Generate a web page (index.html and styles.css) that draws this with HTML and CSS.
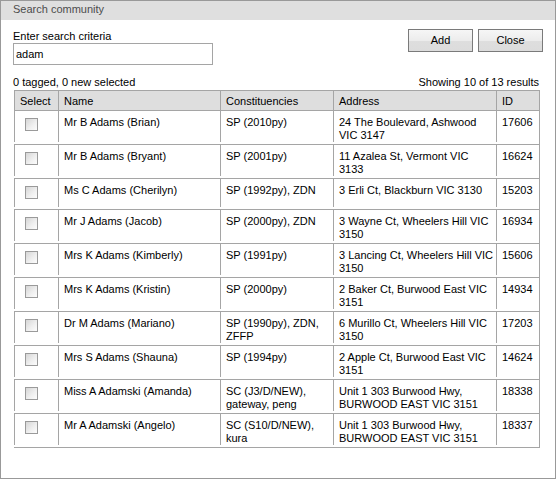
FILE: index.html
```html
<!DOCTYPE html>
<html lang="en">
<head>
    <meta charset="UTF-8">
    <title>Search community</title>
    <link rel="stylesheet" href="styles.css">
</head>
<body>
    <div class="panel">
        <div class="panel-title">Search community</div>

        <div class="search-bar">
            <div class="criteria">
                <label for="criteria">Enter search criteria</label>
                <input id="criteria" type="text" value="adam">
            </div>
            <div class="actions">
                <button class="btn">Add</button>
                <button class="btn">Close</button>
            </div>
        </div>

        <div class="results">
            <div class="summary">
                <span>0 tagged, 0 new selected</span>
                <span>Showing 10 of 13 results</span>
            </div>
            <table class="grid">
                <thead>
                    <tr>
                        <th class="col-select">Select</th>
                        <th class="col-name">Name</th>
                        <th class="col-const">Constituencies</th>
                        <th class="col-addr">Address</th>
                        <th class="col-id">ID</th>
                    </tr>
                </thead>
                <tbody>
                    <tr>
                        <td><input type="checkbox"></td>
                        <td>Mr B Adams (Brian)</td>
                        <td>SP (2010py)</td>
                        <td>24 The Boulevard, Ashwood VIC 3147</td>
                        <td>17606</td>
                    </tr>
                    <tr>
                        <td><input type="checkbox"></td>
                        <td>Mr B Adams (Bryant)</td>
                        <td>SP (2001py)</td>
                        <td>11 Azalea St, Vermont VIC 3133</td>
                        <td>16624</td>
                    </tr>
                    <tr>
                        <td><input type="checkbox"></td>
                        <td>Ms C Adams (Cherilyn)</td>
                        <td>SP (1992py), ZDN</td>
                        <td>3 Erli Ct, Blackburn VIC 3130</td>
                        <td>15203</td>
                    </tr>
                    <tr>
                        <td><input type="checkbox"></td>
                        <td>Mr J Adams (Jacob)</td>
                        <td>SP (2000py), ZDN</td>
                        <td>3 Wayne Ct, Wheelers Hill VIC 3150</td>
                        <td>16934</td>
                    </tr>
                    <tr>
                        <td><input type="checkbox"></td>
                        <td>Mrs K Adams (Kimberly)</td>
                        <td>SP (1991py)</td>
                        <td>3 Lancing Ct, Wheelers Hill VIC 3150</td>
                        <td>15606</td>
                    </tr>
                    <tr>
                        <td><input type="checkbox"></td>
                        <td>Mrs K Adams (Kristin)</td>
                        <td>SP (2000py)</td>
                        <td>2 Baker Ct, Burwood East VIC 3151</td>
                        <td>14934</td>
                    </tr>
                    <tr>
                        <td><input type="checkbox"></td>
                        <td>Dr M Adams (Mariano)</td>
                        <td>SP (1990py), ZDN, ZFFP</td>
                        <td>6 Murillo Ct, Wheelers Hill VIC 3150</td>
                        <td>17203</td>
                    </tr>
                    <tr>
                        <td><input type="checkbox"></td>
                        <td>Mrs S Adams (Shauna)</td>
                        <td>SP (1994py)</td>
                        <td>2 Apple Ct, Burwood East VIC 3151</td>
                        <td>14624</td>
                    </tr>
                    <tr>
                        <td><input type="checkbox"></td>
                        <td>Miss A Adamski (Amanda)</td>
                        <td>SC (J3/D/NEW), gateway, peng</td>
                        <td>Unit 1 303 Burwood Hwy, BURWOOD EAST VIC 3151</td>
                        <td>18338</td>
                    </tr>
                    <tr>
                        <td><input type="checkbox"></td>
                        <td>Mr A Adamski (Angelo)</td>
                        <td>SC (S10/D/NEW), kura</td>
                        <td>Unit 1 303 Burwood Hwy, BURWOOD EAST VIC 3151</td>
                        <td>18337</td>
                    </tr>
                </tbody>
            </table>
        </div>
    </div>
</body>
</html>
```

FILE: styles.css
```css
* {
    margin: 0;
    padding: 0;
    box-sizing: border-box;
}

body {
    font-family: "Liberation Sans", Arial, sans-serif;
    font-size: 11px;
    line-height: 13px;
    color: #000;
    background: #fff;
}

.panel {
    width: 556px;
    height: 479px;
    border: 1px solid #999;
}

.panel-title {
    height: 19px;
    padding: 2px 12px 0;
    background: #dfdfdf;
    color: #4d4d4d;
}

.search-bar {
    display: flex;
    justify-content: space-between;
    padding: 9px 12px 0;
}

.criteria {
    padding-top: 1px;
}

.criteria label {
    display: block;
}

.criteria input {
    display: block;
    width: 200px;
    height: 22px;
    border: 1px solid #a5a5a5;
    padding: 0 2px;
    font: inherit;
    color: #000;
    outline: none;
}

.actions {
    display: flex;
    gap: 5px;
}

.btn {
    width: 65px;
    height: 23px;
    border: 1px solid #7a7a7a;
    background: linear-gradient(#f6f6f6 0%, #ececec 50%, #dedede 51%, #dcdcdc 100%);
    font: inherit;
    color: #000;
    cursor: pointer;
}

.btn:hover {
    background: linear-gradient(#eaf6fd 0%, #d9f0fc 50%, #bee6fd 51%, #a7d9f5 100%);
}

.results {
    padding: 0 16px 0 12px;
    margin-top: 11px;
}

.summary {
    display: flex;
    justify-content: space-between;
    margin-bottom: 1px;
}

.grid {
    width: 526px;
    margin-left: 1px;
    table-layout: fixed;
    border-spacing: 0;
    border-top: 1px solid #a5a5a5;
    border-right: 1px solid #a5a5a5;
}

.grid th {
    padding: 4px 5px 2px;
    background: #dedede;
    border-left: 1px solid #a5a5a5;
    border-bottom: 1px solid #a5a5a5;
    font-weight: normal;
    text-align: left;
}

.col-select { width: 44px; }
.col-name { width: 162px; }
.col-const { width: 113px; }
.col-addr { width: 163px; }
.col-id { width: 43px; }

/* cell dividers stop a little short of the row line */
.grid td {
    padding: 5px 2px 2px 6px;
    vertical-align: top;
    border-bottom: 1px solid #a5a5a5;
    background: linear-gradient(#a5a5a5, #a5a5a5) no-repeat 0 0 / 1px calc(100% - 3px);
    background-origin: border-box;
}

.grid input[type="checkbox"] {
    -webkit-appearance: none;
    appearance: none;
    display: block;
    width: 13px;
    height: 13px;
    margin: 2px 0 8px 5px;
    border: 1px solid #9a9a9a;
    background: linear-gradient(135deg, #d6d6d6 0%, #f0f0f0 60%, #fcfcfc 100%);
    cursor: pointer;
}

.grid input[type="checkbox"]:checked {
    background: #fff url("data:image/svg+xml,%3Csvg xmlns='http://www.w3.org/2000/svg' viewBox='0 0 11 11'%3E%3Cpath d='M2 5.5l2.5 2.5L9 3' fill='none' stroke='%23222' stroke-width='1.6'/%3E%3C/svg%3E") no-repeat center / 11px 11px;
}
```
